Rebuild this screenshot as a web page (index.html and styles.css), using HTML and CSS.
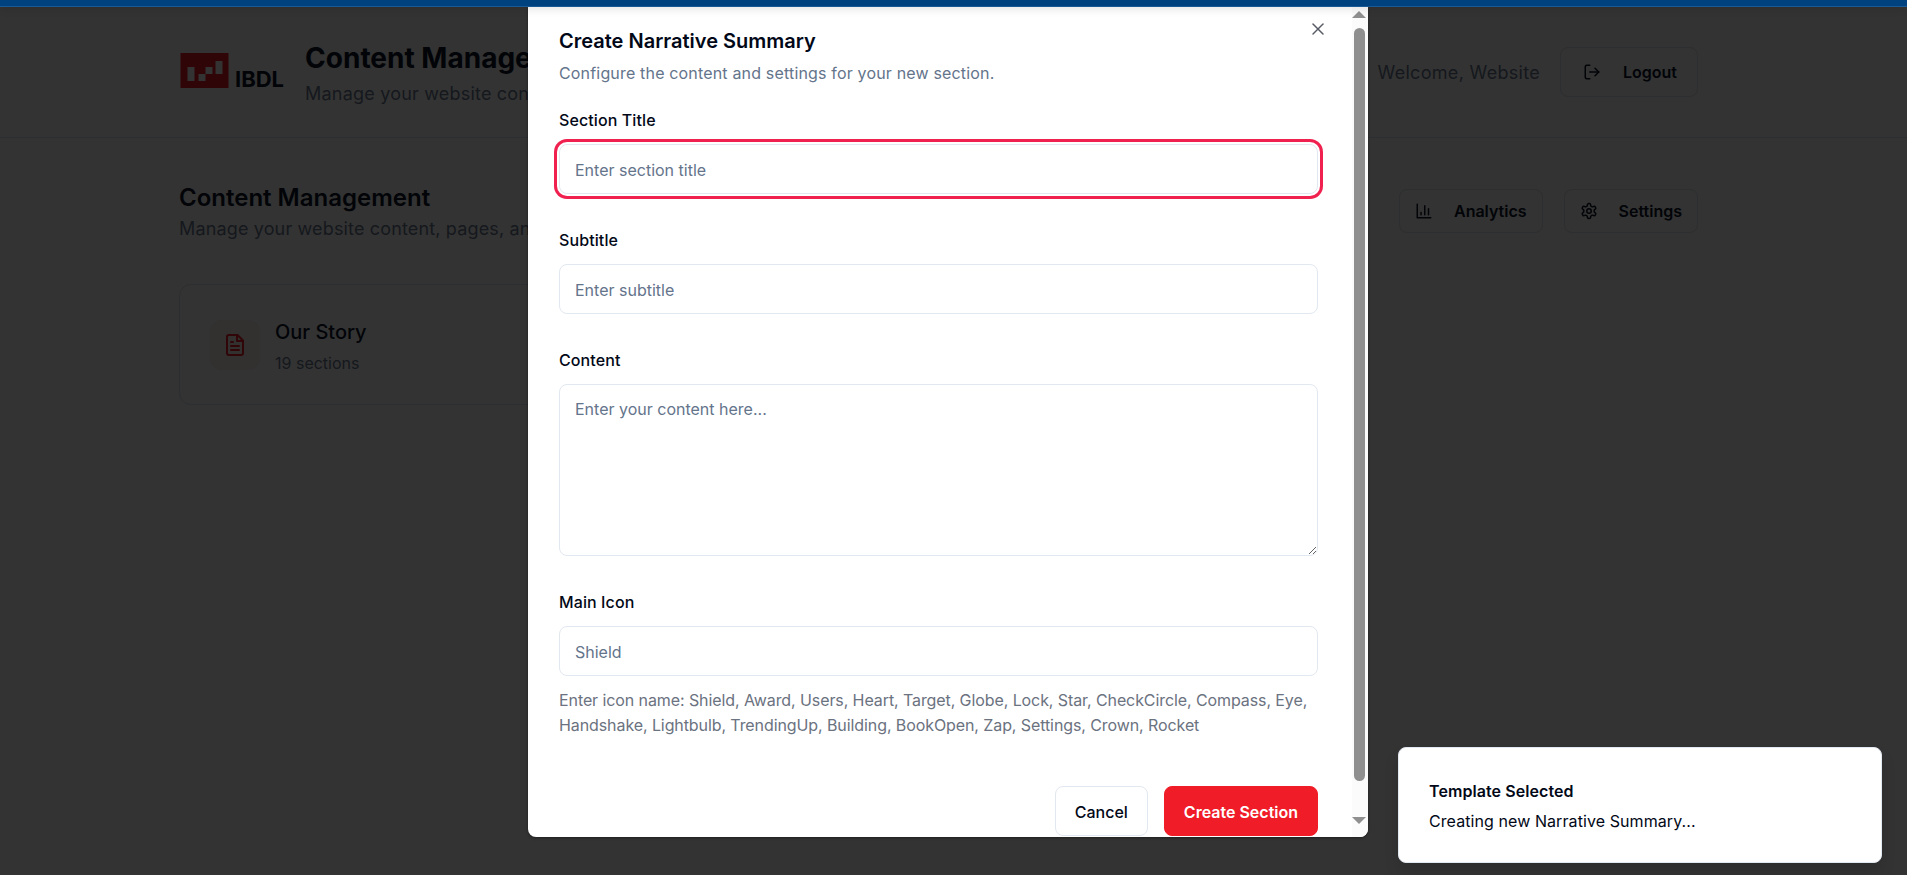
FILE: index.html
```html
<!DOCTYPE html>
<html lang="en">
<head>
<meta charset="utf-8">
<title>Content Management</title>
<link rel="stylesheet" href="styles.css">
</head>
<body>
<div class="topbar"></div>
<header class="site-header">
  <div class="brand">
    <div class="logo">
      <svg class="logo-mark" viewBox="0 0 48 35" aria-hidden="true">
        <rect width="48" height="35" fill="#300507"/>
        <path d="M7 14h7v14H7zM18 21h7v7h-7zM25 14h7v7h-7zM35 8h7v13h-7z" fill="#333"/>
      </svg>
      <span class="logo-text">IBDL</span>
    </div>
    <div class="brand-text">
      <h1>Content Management</h1>
      <p>Manage your website content, pages, and sections</p>
    </div>
  </div>
  <div class="user">
    <span class="welcome">Welcome, Website</span>
    <button class="btn btn-tall">
      <svg class="icon" viewBox="0 0 24 24"><path d="M9 21H5a2 2 0 0 1-2-2V5a2 2 0 0 1 2-2h4"/><path d="M16 17l5-5-5-5"/><path d="M21 12H9"/></svg>
      Logout
    </button>
  </div>
</header>
<main class="main">
  <div class="page-head">
    <div>
      <h2>Content Management</h2>
      <p>Manage your website content, pages, and sections</p>
    </div>
    <div class="actions">
      <button class="btn">
        <svg class="icon" viewBox="0 0 24 24"><path d="M3 3v18h18"/><path d="M18 17V9"/><path d="M13 17V5"/><path d="M8 17v-3"/></svg>
        Analytics
      </button>
      <button class="btn">
        <svg class="icon" viewBox="0 0 24 24"><path d="M12.22 2h-.44a2 2 0 0 0-2 2v.18a2 2 0 0 1-1 1.73l-.43.25a2 2 0 0 1-2 0l-.15-.08a2 2 0 0 0-2.73.73l-.22.38a2 2 0 0 0 .73 2.73l.15.1a2 2 0 0 1 1 1.72v.51a2 2 0 0 1-1 1.74l-.15.09a2 2 0 0 0-.73 2.73l.22.38a2 2 0 0 0 2.73.73l.15-.08a2 2 0 0 1 2 0l.43.25a2 2 0 0 1 1 1.73V20a2 2 0 0 0 2 2h.44a2 2 0 0 0 2-2v-.18a2 2 0 0 1 1-1.73l.43-.25a2 2 0 0 1 2 0l.15.08a2 2 0 0 0 2.73-.73l.22-.39a2 2 0 0 0-.73-2.73l-.15-.08a2 2 0 0 1-1-1.74v-.5a2 2 0 0 1 1-1.74l.15-.09a2 2 0 0 0 .73-2.73l-.22-.38a2 2 0 0 0-2.73-.73l-.15.08a2 2 0 0 1-2 0l-.43-.25a2 2 0 0 1-1-1.73V4a2 2 0 0 0-2-2z"/><circle cx="12" cy="12" r="3"/></svg>
        Settings
      </button>
    </div>
  </div>
  <div class="card">
    <div class="card-icon">
      <svg class="icon icon-red" viewBox="0 0 24 24"><path d="M14.5 2H6a2 2 0 0 0-2 2v16a2 2 0 0 0 2 2h12a2 2 0 0 0 2-2V7.5L14.5 2z"/><path d="M14 2v6h6"/><path d="M16 13H8"/><path d="M16 17H8"/><path d="M10 9H8"/></svg>
    </div>
    <div class="card-text">
      <h3>Our Story</h3>
      <p>19 sections</p>
    </div>
  </div>
</main>

<section class="dialog" role="dialog" aria-label="Create Narrative Summary">
  <div class="dialog-body">
    <button class="close" aria-label="Close">
      <svg viewBox="0 0 24 24"><path d="M18 6L6 18"/><path d="M6 6l12 12"/></svg>
    </button>
    <h2 class="dialog-title">Create Narrative Summary</h2>
    <p class="dialog-sub">Configure the content and settings for your new section.</p>
    <label class="field">
      <span>Section Title</span>
      <input class="control control-focus" placeholder="Enter section title">
    </label>
    <label class="field">
      <span>Subtitle</span>
      <input class="control" placeholder="Enter subtitle">
    </label>
    <label class="field">
      <span>Content</span>
      <textarea class="control area" placeholder="Enter your content here..."></textarea>
    </label>
    <label class="field">
      <span>Main Icon</span>
      <input class="control" placeholder="Shield">
    </label>
    <p class="hint">Enter icon name: Shield, Award, Users, Heart, Target, Globe, Lock, Star, CheckCircle, Compass, Eye, Handshake, Lightbulb, TrendingUp, Building, BookOpen, Zap, Settings, Crown, Rocket</p>
    <div class="dialog-actions">
      <button class="dbtn">Cancel</button>
      <button class="dbtn dbtn-primary">Create Section</button>
    </div>
  </div>
  <div class="scrollbar" aria-hidden="true">
    <i class="arrow arrow-up"></i>
    <i class="thumb"></i>
    <i class="arrow arrow-down"></i>
  </div>
</section>

<aside class="toast">
  <strong>Template Selected</strong>
  <span>Creating new Narrative Summary...</span>
</aside>
</body>
</html>
```

FILE: styles.css
```css
* { box-sizing: border-box; }
html, body { height: 100%; }
body {
  margin: 0;
  height: 875px;
  overflow: hidden;
  background: #333333;
  color: #020408;
  font-family: Inter, "Liberation Sans", sans-serif;
  position: relative;
}
h1, h2, h3, p { margin: 0; }
button { font-family: inherit; }

.topbar {
  height: 7px;
  background: #00427f;
  border-bottom: 1px solid #1a5a96;
  position: relative;
  z-index: 3;
  box-shadow: 0 2px 8px rgba(0, 0, 0, .12);
}

.site-header {
  height: 131px;
  border-bottom: 1px solid #2d2e30;
  padding: 0 209px 0 180px;
  display: flex;
  align-items: center;
  justify-content: space-between;
}
.brand { display: flex; align-items: center; gap: 21px; }
.logo { display: flex; align-items: flex-end; gap: 6px; height: 35px; margin-top: -3px; }
.logo-mark { width: 49px; height: 35px; display: block; }
.logo-text { font-size: 22px; line-height: 18px; font-weight: 700; color: #020408; }
.brand-text { margin-top: 4px; }
.brand-text h1 { font-size: 28px; line-height: 36px; font-weight: 700; white-space: nowrap; }
.brand-text p { margin-top: 4px; font-size: 18px; line-height: 28px; letter-spacing: .2px; color: #15181d; white-space: nowrap; }

.user { display: flex; align-items: center; gap: 20px; }
.welcome { font-size: 18px; letter-spacing: .3px; color: #15181d; }

.btn {
  height: 44px;
  display: inline-flex;
  align-items: center;
  gap: 21px;
  padding: 0 15px;
  background: #333;
  border: 1px solid #2d2e30;
  border-radius: 8px;
  color: #020408;
  font-size: 16px;
  font-weight: 600;
}
.btn-tall { height: 50px; padding: 0 20px 0 22px; gap: 22px; }
.icon { width: 18px; height: 18px; fill: none; stroke: currentColor; stroke-width: 2; stroke-linecap: round; stroke-linejoin: round; flex: none; }
.icon-red { width: 24px; height: 24px; color: #300609; }

.main { padding: 44px 209px 0 179px; }
.page-head { display: flex; justify-content: space-between; align-items: center; }
.page-head h2 { font-size: 24px; line-height: 32px; font-weight: 600; }
.page-head p { margin-top: 1px; font-size: 18px; line-height: 28px; letter-spacing: .15px; color: #15181d; }
.actions { display: flex; gap: 21px; margin-top: -4px; }

.card {
  margin-top: 41px;
  width: 520px;
  height: 121px;
  border: 1px solid #2d2e30;
  border-radius: 12px;
  padding: 0 30px;
  display: flex;
  align-items: center;
  gap: 15px;
}
.card-icon {
  width: 50px;
  height: 50px;
  border-radius: 12px;
  background: #333030;
  display: flex;
  align-items: center;
  justify-content: center;
}
.card-text { padding-top: 4px; }
.card h3 { font-size: 20px; line-height: 28px; font-weight: 500; }
.card p { font-size: 16px; line-height: 24px; margin-top: 5px; color: #15181d; }

.dialog {
  position: absolute;
  left: 528px;
  top: 7px;
  width: 840px;
  height: 830px;
  background: #fff;
  border-radius: 0 0 8px 8px;
  overflow: hidden;
  display: flex;
  box-shadow: 0 1px 3px rgba(0, 0, 0, .4);
  z-index: 2;
}
.dialog-body {
  position: relative;
  flex: 1;
  padding: 22px 34px 0 31px;
}
.close {
  position: absolute;
  top: 12px;
  right: 24px;
  width: 20px;
  height: 20px;
  padding: 0;
  border: 0;
  background: none;
  color: #565b66;
}
.close svg { width: 20px; height: 20px; display: block; fill: none; stroke: currentColor; stroke-width: 1.8; stroke-linecap: round; }
.dialog-title { font-size: 20px; line-height: 25px; font-weight: 600; color: #020817; }
.dialog-sub { margin-top: 7px; font-size: 16px; line-height: 24px; letter-spacing: .17px; color: #64748b; }

.field { display: block; }
.field + .field { margin-top: 34px; }
.dialog-sub + .field { margin-top: 23px; }
.field span { display: block; font-size: 16px; line-height: 24px; font-weight: 500; letter-spacing: .1px; color: #020817; margin-bottom: 12px; }

.control {
  display: block;
  width: 100%;
  height: 50px;
  padding: 2px 16px 0 15px;
  background: #fff;
  border: 1px solid #e2e8f0;
  border-radius: 8px;
  font-family: inherit;
  font-size: 16px;
  color: #020817;
  outline: 0;
}
.control::placeholder { color: #64748b; opacity: 1; }
.control-focus { box-shadow: 0 0 0 2px #fff, 0 0 0 5px #f0214f; }
.area { height: 172px; padding: 14px 16px 12px 15px; resize: vertical; }

.hint { margin-top: 12px; font-size: 16px; line-height: 25px; letter-spacing: -.09px; color: #6b7280; }

.dialog-actions { display: flex; justify-content: flex-end; gap: 16px; margin-top: 48px; }
.dbtn {
  height: 50px;
  padding: 2px 19px 0;
  border: 1px solid #e2e8f0;
  border-radius: 8px;
  background: #fff;
  color: #020817;
  font-size: 16px;
  font-weight: 500;
}
.dbtn-primary { background: #f01c27; border-color: #f01c27; color: #fff; font-weight: 600; }

.scrollbar {
  width: 16px;
  background: #fbfbfb;
  display: flex;
  flex-direction: column;
  align-items: center;
  padding: 4px 2px 13px 0;
  flex: none;
}
.arrow { width: 0; height: 0; border-left: 7px solid transparent; border-right: 7px solid transparent; flex: none; }
.arrow-up { border-bottom: 7px solid #8f8f8f; }
.arrow-down { border-top: 7px solid #8f8f8f; margin-top: 36px; }
.thumb { width: 11px; flex: 1; background: #8f8f8f; border-radius: 6px; margin-top: 10px; }

.toast {
  position: absolute;
  left: 1398px;
  top: 747px;
  width: 484px;
  height: 116px;
  background: #fff;
  border: 1px solid #e2e8f0;
  border-radius: 8px;
  padding: 31px 30px 0;
  display: flex;
  flex-direction: column;
  gap: 6px;
  color: #020817;
  font-size: 16px;
  line-height: 24px;
  letter-spacing: .08px;
  box-shadow: 0 10px 15px rgba(0, 0, 0, .1);
  z-index: 2;
}
.toast strong { font-weight: 600; }
```
